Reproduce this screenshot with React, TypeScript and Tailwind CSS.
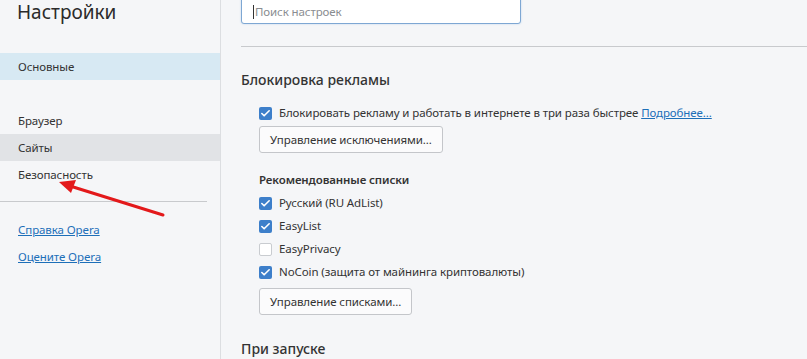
import { Check } from "lucide-react";

const font = { fontFamily: '"Noto Sans", "Open Sans", sans-serif' };

type Item = { label: string; checked: boolean };

const lists: Item[] = [
  { label: "Русский (RU AdList)", checked: true },
  { label: "EasyList", checked: true },
  { label: "EasyPrivacy", checked: false },
  { label: "NoCoin (защита от майнинга криптовалюты)", checked: true },
];

function Box({ checked }: { checked: boolean }) {
  if (checked) {
    return (
      <span className="flex h-[13px] w-[13px] shrink-0 items-center justify-center rounded-[2px] bg-[#3d7fca]">
        <Check size={11} strokeWidth={3.5} className="text-white" />
      </span>
    );
  }
  return <span className="h-[13px] w-[13px] shrink-0 rounded-[2px] border border-[#c9ccd0] bg-white" />;
}

function Btn({ children }: { children: React.ReactNode }) {
  return (
    <button className="flex h-[27px] items-center rounded-[3px] border border-[#c4c6ca] bg-[#fbfbfc] px-[10px] text-[11.5px] tracking-[-0.1px] text-[#333]">
      {children}
    </button>
  );
}

export default function App() {
  return (
    <div style={font} className="relative flex h-[359px] w-[807px] items-start overflow-hidden bg-[#f5f6f8] text-[#333]">
      {/* sidebar */}
      <div className="flex w-[221px] shrink-0 flex-col self-stretch border-r border-[#dcdee1] text-[11.5px] tracking-[-0.1px]">
        <div className="pl-[17px] text-[19px] leading-[24px] tracking-normal text-[#2b2b2b]">Настройки</div>
        <div className="mt-[29px] flex h-[27px] items-center bg-[#d7e9f3] pl-[18px]">Основные</div>
        <div className="h-[27px]" />
        <div className="flex h-[27px] items-center pl-[18px]">Браузер</div>
        <div className="flex h-[27px] items-center bg-[#e1e3e6] pl-[18px]">Сайты</div>
        <div className="flex h-[27px] items-center pl-[18px]">Безопасность</div>
        <div className="mt-[13px] h-px w-[207px] bg-[#c8cacd]" />
        <div className="mt-[14px] flex h-[27px] items-center pl-[18px] text-[#1d6fb8] underline">Справка Opera</div>
        <div className="flex h-[27px] items-center pl-[18px] text-[#1d6fb8] underline">Оцените Opera</div>
      </div>

      {/* main */}
      <div className="flex flex-1 flex-col pl-[20px] text-[11.5px] tracking-[-0.1px]">
        <div className="-mt-px flex h-[25px] w-[280px] items-center rounded-b-[3px] border border-[#7ea7d3] bg-white pl-[11px] text-[#8a8d91] shadow-[0_0_2px_#b9d2ec]">
          <span className="mr-px h-[14px] w-px bg-[#333]" />
          Поиск настроек
        </div>
        <div className="mt-[22px] h-px bg-[#c8cacd]" />
        <div className="mt-[23px] text-[14px] leading-[20px] font-medium tracking-normal">Блокировка рекламы</div>
        <div className="mt-[15px] flex items-center gap-[7px] pl-[18px] leading-[16px]">
          <Box checked />
          <span>
            Блокировать рекламу и работать в интернете в три раза быстрее{" "}
            <span className="text-[#1d6fb8] underline">Подробнее...</span>
          </span>
        </div>
        <div className="mt-[5px] pl-[18px]">
          <Btn>Управление исключениями...</Btn>
        </div>
        <div className="mt-[19px] pl-[18px] leading-[16px] font-semibold">Рекомендованные списки</div>
        <div className="mt-[7px] flex flex-col gap-[7px] pl-[18px]">
          {lists.map((it) => (
            <div key={it.label} className="flex items-center gap-[7px] leading-[16px]">
              <Box checked={it.checked} />
              <span>{it.label}</span>
            </div>
          ))}
        </div>
        <div className="mt-[8px] pl-[18px]">
          <Btn>Управление списками...</Btn>
        </div>
        <div className="mt-[24px] text-[14px] leading-[20px] font-medium tracking-normal">При запуске</div>
      </div>

      {/* red arrow annotation */}
      <svg className="pointer-events-none absolute left-0 top-0" width="807" height="359">
        <line x1="163" y1="215" x2="70" y2="186" stroke="#e3191b" strokeWidth="3" strokeLinecap="round" />
        <polygon points="59,182 76,180 71,193" fill="#e3191b" />
      </svg>
    </div>
  );
}
